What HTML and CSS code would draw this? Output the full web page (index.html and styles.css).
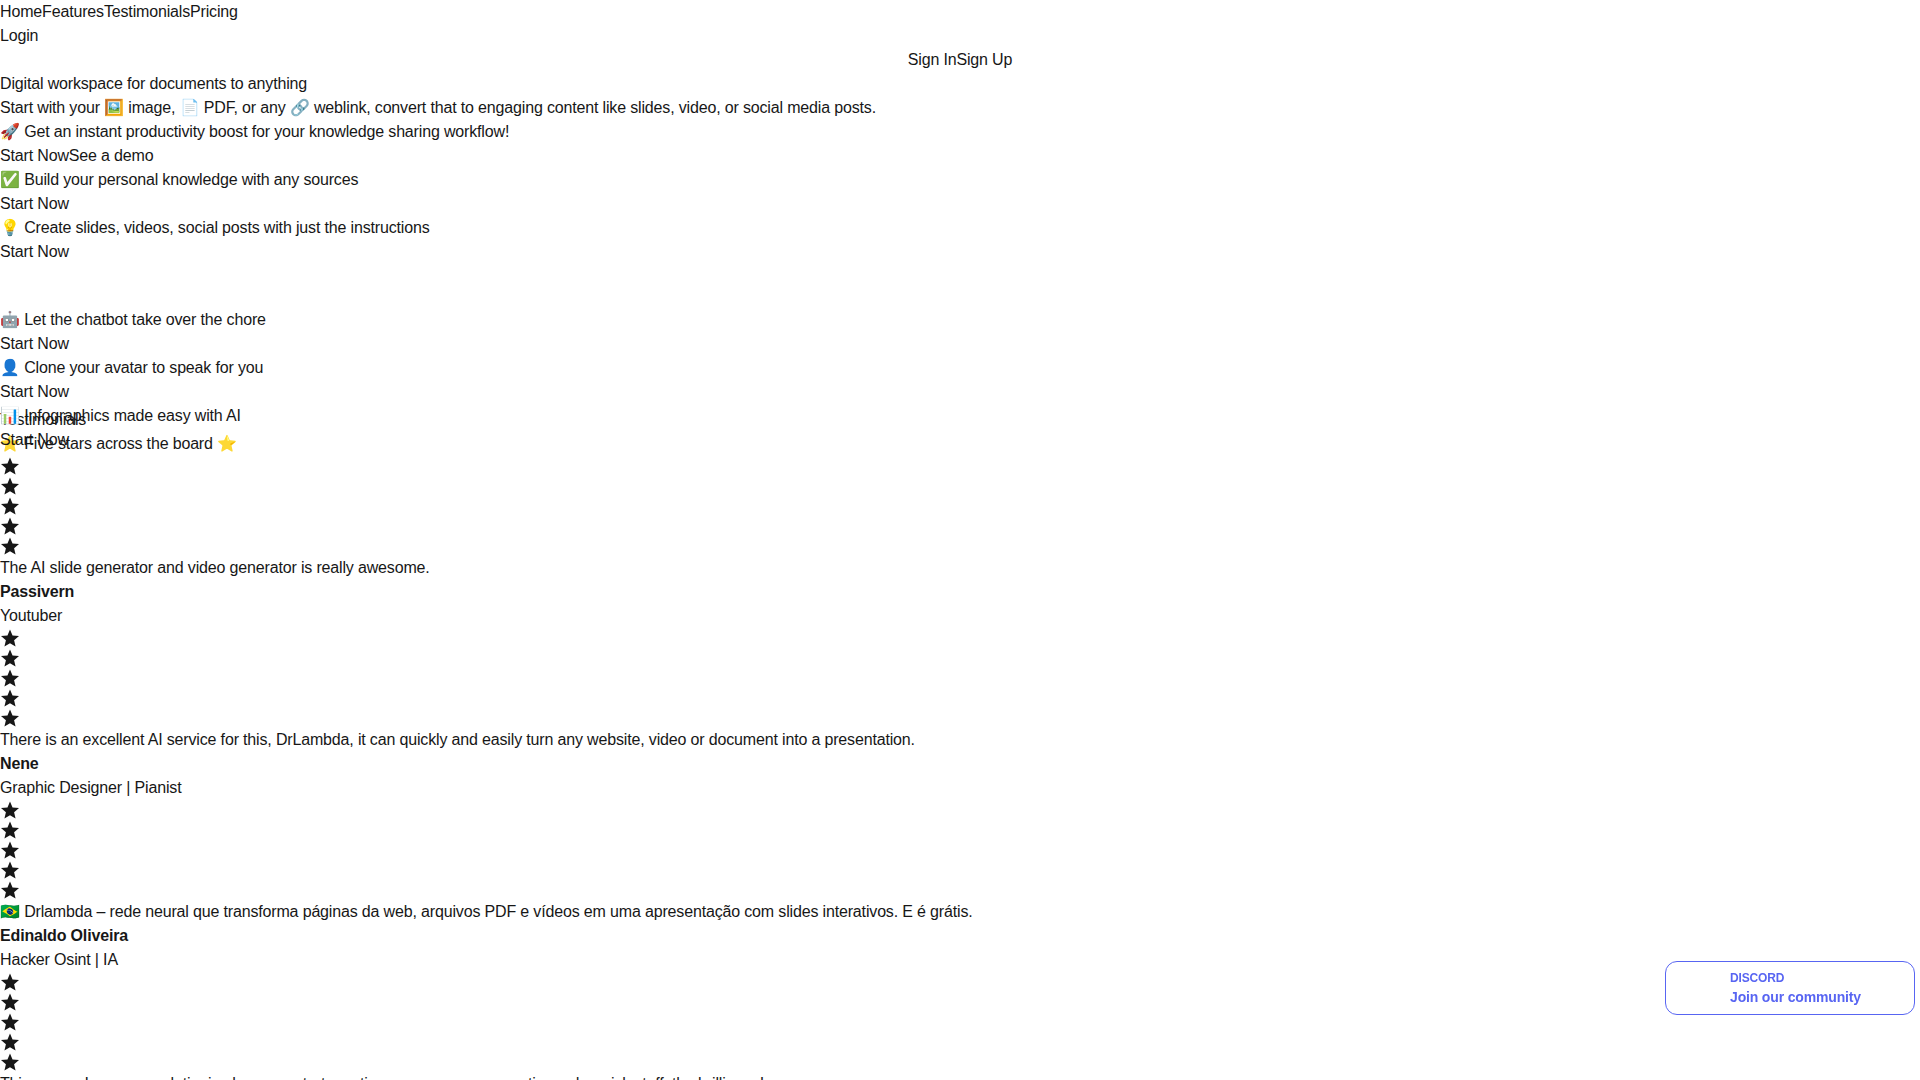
FILE: index.html
```html
<!DOCTYPE html>
<html lang="en">
<head>
    <meta charset="UTF-8">
    <meta name="viewport" content="width=device-width, initial-scale=1.0">
    <title>DrLambda</title>
    <link rel="stylesheet" href="styles.css">
</head>
<body>
    <svg class="sprite" width="0" height="0">
        <symbol id="star" viewBox="0.9 0.4 22.2 22.2">
            <path d="M12 17.27L18.18 21l-1.64-7.03L22 9.24l-7.19-.61L12 2 9.19 8.63 2 9.24l5.46 4.73L5.82 21z"/>
        </symbol>
    </svg>

    <div class="nav-links">
        <a>Home</a><a>Features</a><a>Testimonials</a><a>Pricing</a>
    </div>
    <div>Login</div>
    <div class="auth-links">
        <a>Sign In</a><a>Sign Up</a>
    </div>

    <div class="hero">
        <div>Digital workspace for documents to anything</div>
        <div>Start with your 🖼️ image, 📄 PDF, or any 🔗 weblink, convert that to engaging content like slides, video, or social media posts.</div>
        <div>🚀 Get an instant productivity boost for your knowledge sharing workflow!</div>
        <div><a>Start Now</a><a>See a demo</a></div>
    </div>

    <div class="features">
        <div class="feature-group">
            <div>✅ Build your personal knowledge with any sources</div>
            <div>Start Now</div>
            <div>💡 Create slides, videos, social posts with just the instructions</div>
            <div>Start Now</div>
        </div>
        <div class="feature-group">
            <div>🤖 Let the chatbot take over the chore</div>
            <div>Start Now</div>
            <div>👤 Clone your avatar to speak for you</div>
            <div>Start Now</div>
            <div>📊 Infographics made easy with AI</div>
            <div>Start Now</div>
        </div>
    </div>

    <div class="testimonials">
        <div>Testimonials</div>
        <div>⭐ Five stars across the board ⭐</div>

        <div class="stars">
            <svg><use href="#star"/></svg>
            <svg><use href="#star"/></svg>
            <svg><use href="#star"/></svg>
            <svg><use href="#star"/></svg>
            <svg><use href="#star"/></svg>
        </div>
        <div>The AI slide generator and video generator is really awesome.</div>
        <div class="name">Passivern</div>
        <div>Youtuber</div>

        <div class="stars">
            <svg><use href="#star"/></svg>
            <svg><use href="#star"/></svg>
            <svg><use href="#star"/></svg>
            <svg><use href="#star"/></svg>
            <svg><use href="#star"/></svg>
        </div>
        <div>There is an excellent AI service for this, DrLambda, it can quickly and easily turn any website, video or document into a presentation.</div>
        <div class="name">Nene</div>
        <div>Graphic Designer | Pianist</div>

        <div class="stars">
            <svg><use href="#star"/></svg>
            <svg><use href="#star"/></svg>
            <svg><use href="#star"/></svg>
            <svg><use href="#star"/></svg>
            <svg><use href="#star"/></svg>
        </div>
        <div>🇧🇷 Drlambda – rede neural que transforma páginas da web, arquivos PDF e vídeos em uma apresentação com slides interativos. E é grátis.</div>
        <div class="name">Edinaldo Oliveira</div>
        <div>Hacker Osint | IA</div>

        <div class="stars">
            <svg><use href="#star"/></svg>
            <svg><use href="#star"/></svg>
            <svg><use href="#star"/></svg>
            <svg><use href="#star"/></svg>
            <svg><use href="#star"/></svg>
        </div>
        <div>This seems Insane, revolutionize how you start creating, your money supporting a dev, sick stuff, the brilliance!</div>
    </div>

    <a class="discord-button">
        <span class="discord-label">DISCORD</span>
        <span class="discord-title">Join our community</span>
    </a>
</body>
</html>
```

FILE: styles.css
```css
* {
    margin: 0;
    padding: 0;
    box-sizing: border-box;
}

html, body {
    height: 1080px;
    overflow: hidden;
}

body {
    font-family: 'Liberation Sans', Arial, sans-serif;
    font-size: 16px;
    line-height: 24px;
    letter-spacing: -0.01em;
    color: #171717;
    background-color: white;
}

.sprite {
    display: block;
}

.auth-links {
    text-align: center;
}

/* fixed height, the second group spills over the testimonials heading */
.features {
    position: relative;
    z-index: 1;
    height: 240px;
}

.feature-group {
    margin-bottom: 44px;
}

.name {
    font-weight: 700;
}

.stars svg {
    display: block;
    width: 20px;
    height: 20px;
    fill: #171717;
}

.discord-button {
    position: fixed;
    right: 5px;
    bottom: 65px;
    width: 250px;
    height: 54px;
    padding: 1px 0 0 64px;
    display: flex;
    flex-direction: column;
    justify-content: center;
    border: 1px solid #5865f2;
    border-radius: 12px;
    color: #5865f2;
    font-weight: 700;
}

.discord-label {
    font-size: 12px;
    line-height: 16px;
    margin-bottom: 1px;
}

.discord-title {
    font-size: 14px;
    line-height: 20px;
}
```
